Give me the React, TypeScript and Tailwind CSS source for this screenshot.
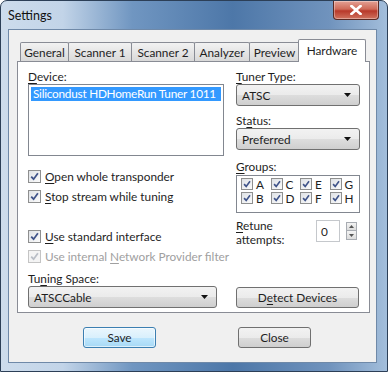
import { type ReactNode } from "react";

const Key = ({ children }: { children: ReactNode }) => (
  <span className="underline underline-offset-[2px]">{children}</span>
);

const Check = ({ disabled = false, size = 13 }: { disabled?: boolean; size?: number }) => (
  <span
    className={`flex shrink-0 items-center justify-center border ${
      disabled
        ? "border-[#c4c4c4] bg-[#f4f4f4]"
        : "border-[#8e8f8f] bg-[linear-gradient(135deg,#dfe2e6,#fbfbfb)]"
    }`}
    style={{ width: size, height: size }}
  >
    <svg width={size - 4} height={size - 4} viewBox="0 0 9 9">
      <path
        d="M1.2 4.6 L3.6 7.2 L7.9 1.3"
        fill="none"
        stroke={disabled ? "#b9bec6" : "#40548a"}
        strokeWidth="1.8"
      />
    </svg>
  </span>
);

const CheckRow = ({
  children,
  disabled = false,
}: {
  children: ReactNode;
  disabled?: boolean;
}) => (
  <div
    className={`flex h-[20px] items-center gap-[4px] whitespace-nowrap ${
      disabled ? "text-[#a0a0a0]" : "text-[#1e1e1e]"
    }`}
  >
    <Check disabled={disabled} />
    <span>{children}</span>
  </div>
);

const Arrow = () => (
  <svg width="7" height="4" viewBox="0 0 7 4" className="shrink-0">
    <path d="M0 0 H7 L3.5 4 Z" fill="#111" />
  </svg>
);

const Combo = ({ value, width }: { value: string; width: string }) => (
  <div
    className={`flex h-[22px] ${width} items-center justify-between rounded-[3px] border border-[#707070] bg-[linear-gradient(#f2f2f2_0%,#ebebeb_50%,#dddddd_51%,#cfcfcf_100%)] pl-[5px] pr-[8px] text-[#1e1e1e]`}
  >
    <span>{value}</span>
    <Arrow />
  </div>
);

const tabs = [
  { label: "General", w: "w-[49px]" },
  { label: "Scanner 1", w: "w-[64px]" },
  { label: "Scanner 2", w: "w-[64px]" },
  { label: "Analyzer", w: "w-[56px]" },
  { label: "Preview", w: "w-[51px]" },
];

const groups = ["A", "C", "E", "G", "B", "D", "F", "H"];

const Settings = () => {
  return (
    <div
      className="relative h-[372px] w-[388px] overflow-hidden rounded-t-[7px] border border-[#2c3f57] bg-[linear-gradient(90deg,#cddcec_0%,#c2d4e8_16%,#7096c1_34%,#4d77a8_60%,#7093bd_85%,#a3bedb_100%)] text-[11.8px] leading-[15px]"
      style={{ fontFamily: 'Lato, "Noto Sans", sans-serif' }}
    >
      {/* title bar */}
      <div className="flex h-[28px] items-start justify-between">
        <span className="pl-[7px] pt-[7px] text-[12.5px] text-[#111]">Settings</span>
        <div className="mr-[8px] flex h-[19px] w-[46px] items-center justify-center rounded-b-[4px] border border-t-0 border-[#5a2a24] bg-[linear-gradient(#e3a195_0%,#cf6a58_45%,#b8392a_55%,#d0735f_100%)] shadow-[inset_0_0_0_1px_rgba(255,255,255,0.35)]">
          <svg width="12" height="10" viewBox="0 0 12 10">
            <path d="M1.5 1 L10.5 9 M10.5 1 L1.5 9" stroke="#fff" strokeWidth="2.6" strokeLinecap="square" />
          </svg>
        </div>
      </div>

      {/* client */}
      <div className="ml-[7px] h-[334px] w-[369px] border border-[#6f89a8] bg-[#f0f0f0] pl-[8px] pt-[8px]">
        {/* tab strip */}
        <div className="relative z-10 flex h-[23px] items-end whitespace-nowrap pl-[3px]">
          {tabs.map((t) => (
            <div
              key={t.label}
              className={`flex h-[19px] ${t.w} -mr-px items-center justify-center rounded-t-[2px] border border-b-0 border-[#898c95] bg-[linear-gradient(#f2f2f2,#d9d9d9)] text-[#1e1e1e]`}
            >
              {t.label}
            </div>
          ))}
          <div className="-ml-[1px] mb-[-1px] flex h-[23px] w-[68px] items-start justify-center rounded-t-[2px] border border-b-0 border-[#898c95] bg-white pt-[3px] text-[#1e1e1e]">
            Hardware
          </div>
        </div>

        {/* panel */}
        <div className="flex h-[252px] w-[353px] gap-[12px] border border-[#898c95] bg-white pl-[10px] pt-[7px] text-[#1e1e1e]">
          {/* left column */}
          <div className="flex w-[196px] flex-col">
            <div className="h-[15px]">
              <Key>D</Key>evice:
            </div>
            <div className="h-[72px] border border-[#828790] bg-white p-[2px]">
              <div className="h-[14px] overflow-hidden whitespace-nowrap bg-[#3399ff] pl-[2px] leading-[14px] tracking-[-0.25px] text-white">
                Silicondust HDHomeRun Tuner 1011
              </div>
            </div>
            <div className="mt-[10px]">
              <CheckRow>
                <Key>O</Key>pen whole transponder
              </CheckRow>
              <CheckRow>
                <Key>S</Key>top stream while tuning
              </CheckRow>
            </div>
            <div className="mt-[20px]">
              <CheckRow>
                <Key>U</Key>se standard interface
              </CheckRow>
              <CheckRow disabled>
                Use internal <Key>N</Key>etwork Provider filter
              </CheckRow>
            </div>
            <div className="mt-[5px] h-[15px]">
              Tu<Key>n</Key>ing Space:
            </div>
            <Combo value="ATSCCable" width="w-[189px]" />
          </div>

          {/* right column */}
          <div className="flex w-[124px] flex-col">
            <div className="h-[15px]">
              <Key>T</Key>uner Type:
            </div>
            <Combo value="ATSC" width="w-[124px]" />
            <div className="mt-[7px] h-[15px]">
              St<Key>a</Key>tus:
            </div>
            <Combo value="Preferred" width="w-[124px]" />
            <div className="mt-[9px] h-[15px]">
              <Key>G</Key>roups:
            </div>
            <div className="mt-px grid h-[38px] grid-cols-4 content-start border border-[#828790] bg-white pl-[4px] pt-px">
              {groups.map((g) => (
                <div key={g} className="flex h-[14px] items-center gap-[3px]">
                  <Check size={12} />
                  <span>{g}</span>
                </div>
              ))}
            </div>
            <div className="mt-[6px] flex items-start">
              <div className="w-[80px] leading-[14px]">
                <Key>R</Key>etune
                <br />
                attempts:
              </div>
              <div className="mt-px flex h-[22px] w-[24px] items-center border border-[#c5c8cc] bg-white pl-[4px]">
                0
              </div>
              <div className="ml-[6px] mt-[3px] flex flex-col">
                <div className="flex h-[9px] w-[11px] items-center justify-center border border-[#a8acb2] bg-[linear-gradient(#f4f4f4,#dcdcdc)]">
                  <svg width="5" height="3" viewBox="0 0 5 3">
                    <path d="M0 3 H5 L2.5 0 Z" fill="#555" />
                  </svg>
                </div>
                <div className="flex h-[9px] w-[11px] items-center justify-center border border-t-0 border-[#a8acb2] bg-[linear-gradient(#f4f4f4,#dcdcdc)]">
                  <svg width="5" height="3" viewBox="0 0 5 3">
                    <path d="M0 0 H5 L2.5 3 Z" fill="#555" />
                  </svg>
                </div>
              </div>
            </div>
            <div className="mt-[40px] flex h-[21px] w-[123px] items-center justify-center rounded-[3px] border border-[#707070] bg-[linear-gradient(#f2f2f2_0%,#ebebeb_50%,#dddddd_51%,#cfcfcf_100%)]">
              D<Key>e</Key>tect Devices
            </div>
          </div>
        </div>

        {/* buttons */}
        <div className="mt-[14px] flex gap-[82px] pl-[66px] text-[#1e1e1e]">
          <div className="flex h-[21px] w-[73px] items-center justify-center rounded-[3px] border border-[#3c7fb1] bg-[linear-gradient(#eaf6fd_0%,#d9f0fc_50%,#bee6fd_51%,#a7d9f5_100%)] shadow-[inset_0_0_0_1px_rgba(255,255,255,0.6)]">
            Save
          </div>
          <div className="flex h-[21px] w-[73px] items-center justify-center rounded-[3px] border border-[#707070] bg-[linear-gradient(#f2f2f2_0%,#ebebeb_50%,#dddddd_51%,#cfcfcf_100%)]">
            Close
          </div>
        </div>
      </div>
    </div>
  );
};

export default function App() {
  return <Settings />;
}
